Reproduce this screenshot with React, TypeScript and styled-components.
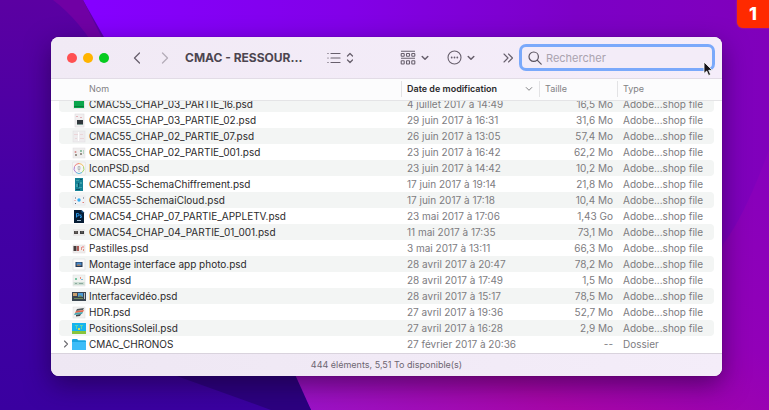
import React from "react";
import styled, { createGlobalStyle, css } from "styled-components";

const GlobalStyle = createGlobalStyle`
  *, *::before, *::after { box-sizing: border-box; }
  html, body, #root { height: 100%; }
  body {
    margin: 0;
    overflow: hidden;
    font-family: Inter, "Liberation Sans", sans-serif;
    font-size: 10px;
    line-height: 16px;
    color: #2b2a2c;
  }
`;

const Desktop = styled.main`
  position: relative;
  isolation: isolate;
  display: flex;
  min-height: 100%;
  padding: 37px 47px 34px 51px;
`;

const Wallpaper = styled.svg`
  position: absolute;
  inset: 0;
  z-index: -1;
  width: 100%;
  height: 100%;
`;

const StepBadge = styled.div`
  position: absolute;
  top: 0;
  right: 0;
  display: flex;
  align-items: center;
  justify-content: center;
  width: 32px;
  height: 28px;
  border-bottom-left-radius: 6px;
  background: #ff2a00;
  box-shadow: 0 0 2px #c63a5c;
  color: #fff;
  font-size: 18px;
  font-weight: 800;
`;

const Window = styled.section`
  flex: 1;
  min-width: 0;
  display: flex;
  flex-direction: column;
  overflow: hidden;
  border-radius: 8px;
  background: #fff;
  box-shadow: 0 0 1px rgba(20, 0, 40, 0.6), 0 9px 26px rgba(20, 0, 40, 0.5);
`;

const Toolbar = styled.header`
  display: flex;
  align-items: center;
  height: 42px;
  padding: 0 7px 0 16px;
  background: linear-gradient(90deg, #f1eaf5, #f5edfa);
  border-bottom: 1px solid #e2dce6;
  color: #68606d;
`;

const Lights = styled.div`
  display: flex;
  gap: 6px;
  margin-right: 23px;
`;

const Light = styled.button<{ $color: string }>`
  width: 10px;
  height: 10px;
  padding: 0;
  border: 0;
  border-radius: 50%;
  background: ${(p) => p.$color};
`;

const ToolButton = styled.button<{ $dim?: boolean }>`
  display: flex;
  align-items: center;
  gap: 5px;
  padding: 0;
  border: 0;
  background: none;
  color: ${(p) => (p.$dim ? "#b5adb9" : "inherit")};
  svg { display: block; }
`;

const Nav = styled.nav`
  display: flex;
  gap: 18px;
`;

const Title = styled.h1`
  flex: 0 0 118px;
  margin: 0 24px 0 15px;
  font-size: 12px;
  font-weight: 700;
  color: #4c454f;
  white-space: nowrap;
`;

const ToolGroup = styled.div`
  display: flex;
  align-items: center;
  gap: 18px;
  margin: 0 27px 0 auto;
`;

const Search = styled.label`
  display: flex;
  align-items: center;
  gap: 4px;
  width: 196px;
  height: 27px;
  margin-left: 5px;
  padding: 0 6px;
  border: 3px solid #7aa9fb;
  border-radius: 7px;
  background: #f3ecf8;
`;

const SearchInput = styled.input`
  flex: 1;
  min-width: 0;
  padding: 0;
  border: 0;
  outline: 0;
  background: none;
  font: inherit;
  font-size: 11px;
  &::placeholder { color: #aaa3af; opacity: 1; }
`;

const ListArea = styled.div`
  flex: 1;
  min-height: 0;
  overflow: hidden;
`;

const Table = styled.table`
  display: block;
`;

const columns = css`
  display: grid;
  grid-template-columns: minmax(0, 1fr) 138px 78px 97px;
`;

const Head = styled.thead`
  position: relative;
  z-index: 1;
  display: block;
  padding: 0 8px;
  background: #fcfcfd;
  border-bottom: 1px solid #e4e4e6;
`;

const HeadRow = styled.tr`
  ${columns}
  height: 21px;
  padding: 2px 0 3px;
`;

const HeadCell = styled.th<{ $first?: boolean; $active?: boolean }>`
  display: flex;
  align-items: center;
  justify-content: space-between;
  padding: 0 6px 0 ${(p) => (p.$first ? "30px" : "5px")};
  border-left: ${(p) => (p.$first ? "0" : "1px solid #e3e3e5")};
  font-size: 9px;
  font-weight: ${(p) => (p.$active ? 600 : 400)};
  color: ${(p) => (p.$active ? "#2b2a2c" : "#828184")};
`;

const SortMark = styled.span`
  display: flex;
  color: #828184;
`;

const Body = styled.tbody`
  display: block;
  margin-top: -5px;
  padding: 0 8px;
`;

const Row = styled.tr`
  ${columns}
  height: 16px;
  border-radius: 4px;
  &:nth-child(odd) { background: #f3f5f4; }
`;

const Cell = styled.td<{ $right?: boolean }>`
  padding: 0 4px 0 6px;
  text-align: ${(p) => (p.$right ? "right" : "left")};
  color: #7d7c7f;
  white-space: nowrap;
`;

const NameCell = styled.td`
  display: grid;
  grid-template-columns: 10px 14px 1fr;
  column-gap: 3px;
  align-items: center;
  padding: 0;
  white-space: nowrap;
`;

const FileName = styled.span`
  grid-column: 3;
`;

const Thumb = styled.svg`
  grid-column: 2;
  grid-row: 1;
  display: block;
`;

const Disclosure = styled.button`
  grid-column: 1;
  grid-row: 1;
  padding: 0 0 0 4px;
  border: 0;
  background: none;
  color: #6d6c70;
  svg { display: block; }
`;

const StatusBar = styled.footer`
  height: 23px;
  padding-top: 3px;
  border-top: 1px solid #d9d3dd;
  background: linear-gradient(90deg, #eee7f3, #f4edf9);
  color: #6d6671;
  font-size: 9px;
  text-align: center;
`;

const Pointer = styled.svg`
  position: absolute;
  top: 61px;
  right: 56px;
`;

function Chevron({ d, w, h, sw = 1.3 }: { d: string; w: number; h: number; sw?: number }) {
  return (
    <svg width={w} height={h} viewBox={`0 0 ${w} ${h}`} fill="none" stroke="currentColor" strokeWidth={sw} strokeLinecap="round" strokeLinejoin="round">
      <path d={d} />
    </svg>
  );
}

const Down = () => <Chevron w={8} h={6} d="M1.2 1.5 4 4.3 6.8 1.5" sw={1.5} />;

const art: Record<string, React.ReactNode> = {
  green: <><rect x="1" y="2" width="12" height="10" fill="#e4e8e6" /><rect x="2" y="2" width="10" height="9" fill="#08a64c" /><path d="M2 9h10v1H2z" fill="#087a3a" /></>,
  doc: <><rect x="3" y="1" width="9" height="13" fill="#f1eff0" stroke="#dddadd" strokeWidth=".6" /><path d="M4 3h2v1H4zM8 4h2v1H8z" fill="#e4b3b8" /><rect x="5" y="7" width="6" height="4" fill="#30383c" /><path d="M5 11h6v1H5z" fill="#7f9993" /></>,
  pale: <><rect x="1" y="2" width="12" height="11" fill="#eeecee" stroke="#e0dde0" strokeWidth=".5" /><path d="M2 5h4v1H2zM8 5h3v1H8zM3 9h2v1H3zM8 9h4v1H8z" fill="#ead6d9" /><path d="M6.5 3v9" stroke="#fff" /></>,
  dots: <><rect x="1" y="3" width="12" height="10" fill="#efeeee" stroke="#e2e0e1" strokeWidth=".5" /><circle cx="3.5" cy="7" r="1" fill="#d58d8b" /><circle cx="9" cy="6" r="1" fill="#73ae8a" /><path d="M3 9h2v2H3zM8 8h2v2H8z" fill="#9a948b" /><path d="M11 5h1v4h-1z" fill="#b9d4c2" /></>,
  rainbow: <><rect x=".5" y="1" width="13" height="13" rx="1" fill="#f6f5f5" stroke="#dedcdc" strokeWidth=".5" /><g fill="none" strokeWidth="1"><path d="M7 2.500a5 5 0 0 1 4.500 3" stroke="#f1bf5c" /><path d="M11.500 5.500a5 5 0 0 1-1.500 6" stroke="#a4d46c" /><path d="M10 11.500a5 5 0 0 1-6 0" stroke="#62b9dc" /><path d="M4 11.500a5 5 0 0 1-1.500-6" stroke="#ad83d6" /><path d="M2.500 5.500a5 5 0 0 1 4.500-3" stroke="#ef7d7b" /></g><path d="M7 5v6M6 5.500h2v3H6z" stroke="#a3a8ac" strokeWidth=".6" fill="none" /></>,
  teal: <><rect x="3" y="1" width="8" height="13" fill="#168296" /><path d="M4 3h3v1H4zM8 5h2v2H8zM4 7h2v3H4zM7 10h3v1H7z" fill="#3ea3ab" /><path d="M8 2h2v1H8zM6 6h1v4H6zM4 12h4v1H4z" fill="#0b5266" /></>,
  cloud: <><rect x="1" y="3" width="12" height="9" fill="#f2f3f5" stroke="#e3e3e6" strokeWidth=".5" /><circle cx="7" cy="7" r="1.700" fill="#32adf0" /><path d="M3 4.500h1v1H3zM11 4.500h1v1h-1zM3 10h1v1H3z" fill="#556273" /><path d="M2.500 7h1v1h-1zM10.500 9h1.500v1h-1.500z" fill="#de817b" /></>,
  ps: <><path d="M2 1h7.500L12 3.500V14H2z" fill="#061d34" /><path d="M9.500 1v2.500H12" fill="#23639b" /><path d="M4.500 8.500v-4h1.300a1.200 1.200 0 0 1 0 2.500H4.500M9.500 6H8.300l-.3.700 1.500.8-.3 1H8" fill="none" stroke="#31a8ff" strokeWidth=".9" /><path d="M5 11h4v1H5z" fill="#9fb9cf" /></>,
  mono: <><rect x="1" y="4" width="12" height="7" fill="#eae9e8" /><rect x="2" y="6" width="4" height="3" fill="#4d4a47" /><rect x="8" y="6" width="4" height="3" fill="#3c3d3e" /><path d="M3 7h2M9 7h2" stroke="#8c8780" strokeWidth=".7" /></>,
  pills: <><rect x="1" y="4" width="12" height="8" fill="#efecec" stroke="#dfdbdb" strokeWidth=".5" /><rect x="1.500" y="5" width="3" height="5" fill="#443b3b" /><rect x="5" y="5" width="2" height="5" fill="#ad5b56" /><path d="M9 6h1v3H9zM11 8h1v2h-1z" fill="#e59084" /><path d="M10 5h2v2h-2z" fill="#edb1b0" /></>,
  photo: <><rect x="1" y="2" width="12" height="11" rx=".5" fill="#fafafa" stroke="#dcdcdd" strokeWidth=".6" /><rect x="3.500" y="5" width="7" height="5" fill="#263a55" /><rect x="4.500" y="5.500" width="5" height="3" fill="#4688ca" /><path d="m4.500 9 2-2 3 2z" fill="#a17b5f" /></>,
  raw: <><rect x="1" y="2" width="12" height="11" fill="#f0f2f0" stroke="#dadddd" strokeWidth=".5" /><path d="M3 5h2v2H3z" fill="#79c5a1" /><path d="M8 4h1v2H8z" fill="#e8917e" /><path d="M9 6h2v1H9z" fill="#7eb6d9" /><path d="M1.500 9h11v3h-11z" fill="#cbdcd1" /><path d="M3 10h2v1H3zM7 10h4v1H7z" fill="#8caaa0" /></>,
  video: <><rect x="0" y="3" width="14" height="9" fill="#3a4550" /><path d="M1 4h4v3H1z" fill="#c8a06e" /><path d="M6 4h5v4H6z" fill="#4c9ad6" /><path d="m6 8 2-2 3 2zM2 9h9v1H2z" fill="#6f8c5b" /><path d="M12 4h1v6h-1z" fill="#bcc3c9" /></>,
  hdr: <><rect x="1" y="2" width="12" height="11" fill="#f2f2f1" stroke="#dedede" strokeWidth=".5" /><path d="m5 4 7-1-1 2-7 1z" fill="#51585b" /><path d="m4 6 8-1-1 2-8 1z" fill="#e2674d" /><path d="m3 8 8-1-1 2-8 1z" fill="#47a6b0" /><path d="m4 10 5-1-1 2-4 .500z" fill="#40464a" /></>,
  sun: <><rect x="0" y="2" width="14" height="11" fill="#14b4ef" /><path d="M0 10h14v3H0z" fill="#87c43c" /><path d="M3 4h3v1H3zM4 5h1v3H4zM8 4h3v1H8zM9 5h1v3H9z" fill="#5fd3a8" /><path d="M6 7h2v2H6z" fill="#d5dc52" /></>,
  folder: <><path d="M0 3a1 1 0 0 1 1-1h4l1.300 1.300H13a1 1 0 0 1 1 1V12a1 1 0 0 1-1 1H1a1 1 0 0 1-1-1z" fill="#19a5e1" /><path d="M0 5h14v7a1 1 0 0 1-1 1H1a1 1 0 0 1-1-1z" fill="#3dbdf8" /></>,
};

const files: [string, string, string, string][] = [
  ["green", "CMAC55_CHAP_03_PARTIE_16.psd", "4 juillet 2017 à 14:49", "16,5 Mo"],
  ["doc", "CMAC55_CHAP_03_PARTIE_02.psd", "29 juin 2017 à 16:31", "31,6 Mo"],
  ["pale", "CMAC55_CHAP_02_PARTIE_07.psd", "26 juin 2017 à 13:05", "57,4 Mo"],
  ["dots", "CMAC55_CHAP_02_PARTIE_001.psd", "23 juin 2017 à 16:42", "62,2 Mo"],
  ["rainbow", "IconPSD.psd", "23 juin 2017 à 14:42", "10,2 Mo"],
  ["teal", "CMAC55-SchemaChiffrement.psd", "17 juin 2017 à 19:14", "21,8 Mo"],
  ["cloud", "CMAC55-SchemaiCloud.psd", "17 juin 2017 à 17:18", "10,4 Mo"],
  ["ps", "CMAC54_CHAP_07_PARTIE_APPLETV.psd", "23 mai 2017 à 17:06", "1,43 Go"],
  ["mono", "CMAC54_CHAP_04_PARTIE_01_001.psd", "11 mai 2017 à 17:35", "73,1 Mo"],
  ["pills", "Pastilles.psd", "3 mai 2017 à 13:11", "66,3 Mo"],
  ["photo", "Montage interface app photo.psd", "28 avril 2017 à 20:47", "78,2 Mo"],
  ["raw", "RAW.psd", "28 avril 2017 à 17:49", "1,5 Mo"],
  ["video", "Interfacevidéo.psd", "28 avril 2017 à 15:17", "78,5 Mo"],
  ["hdr", "HDR.psd", "27 avril 2017 à 19:36", "52,7 Mo"],
  ["sun", "PositionsSoleil.psd", "27 avril 2017 à 16:28", "2,9 Mo"],
  ["folder", "CMAC_CHRONOS", "27 février 2017 à 20:36", "--"],
];

export default function App() {
  return (
    <Desktop>
      <GlobalStyle />
      <Wallpaper viewBox="0 0 769 410" preserveAspectRatio="none" aria-hidden="true">
        <defs>
          <linearGradient id="sky" x1="0" y1="0" x2="1" y2="0">
            <stop offset=".12" stopColor="#8500ff" />
            <stop offset=".45" stopColor="#8200e8" />
            <stop offset=".75" stopColor="#7c00c6" />
            <stop offset="1" stopColor="#8000bb" />
          </linearGradient>
          <linearGradient id="night" x1="0" y1="0" x2="0" y2="1">
            <stop offset="0" stopColor="#5b00a2" />
            <stop offset=".5" stopColor="#4300a4" />
            <stop offset="1" stopColor="#3a00a0" />
          </linearGradient>
          <linearGradient id="glow" x1="0" y1="1" x2="1" y2="0">
            <stop offset="0" stopColor="#9a14cc" />
            <stop offset=".3" stopColor="#a806a8" />
            <stop offset=".6" stopColor="#9200b8" />
            <stop offset="1" stopColor="#8600bc" />
          </linearGradient>
        </defs>
        <path d="M0 0h769v410H0z" fill="url(#sky)" />
        <path d="M769 150 Q745 215 724 243L690 330 270 320l41 90h458z" fill="url(#glow)" />
        <path d="M0 0h83l130 230 98 180H0z" fill="url(#night)" />
        <path d="M53 0h30l20 40v20Q80 20 53 0z" fill="#7000a4" />
        <path d="M160 370h133l18 40h-40z" fill="#2c0080" />
      </Wallpaper>
      <Window aria-label="CMAC - RESSOURCES">
        <Toolbar>
          <Lights>
            <Light $color="#ff5052" aria-label="Fermer" />
            <Light $color="#ffb400" aria-label="Réduire" />
            <Light $color="#06cb1f" aria-label="Agrandir" />
          </Lights>
          <Nav>
            <ToolButton aria-label="Précédent"><Chevron w={10} h={14} d="M7.500 2 2.500 7l5 5" /></ToolButton>
            <ToolButton $dim aria-label="Suivant"><Chevron w={10} h={14} d="m2.500 2 5 5-5 5" /></ToolButton>
          </Nav>
          <Title>CMAC - RESSOUR...</Title>
          <ToolButton aria-label="Présentation">
            <svg width="14" height="12" viewBox="0 0 14 12" fill="none" stroke="currentColor" strokeWidth="1.200" strokeLinecap="round">
              <path d="M4 1.500h9M4 6h9M4 10.500h9M.9 1.500h.2M.9 6h.2M.9 10.500h.2" />
            </svg>
            <Chevron w={8} h={12} d="M1.500 4 4 1.500 6.500 4M1.500 8 4 10.500 6.500 8" />
          </ToolButton>
          <ToolGroup>
            <ToolButton aria-label="Grouper">
              <svg width="16" height="16" viewBox="0 0 16 16" fill="none" stroke="currentColor" strokeWidth="1.100">
                <path d="M1 1.300h14M1 8.300h14" />
                <rect x="1.200" y="3.500" width="3" height="2.700" rx=".5" /><rect x="6.500" y="3.500" width="3" height="2.700" rx=".5" /><rect x="11.800" y="3.500" width="3" height="2.700" rx=".5" />
                <rect x="1.200" y="10.800" width="3" height="3.200" rx=".5" /><rect x="6.500" y="10.800" width="3" height="3.200" rx=".5" /><rect x="11.800" y="10.800" width="3" height="3.200" rx=".5" />
              </svg>
              <Down />
            </ToolButton>
            <ToolButton aria-label="Actions">
              <svg width="15" height="15" viewBox="0 0 15 15" fill="none" stroke="currentColor" strokeWidth="1.100">
                <circle cx="7.500" cy="7.500" r="6.500" />
                <g fill="currentColor" stroke="none"><circle cx="4.700" cy="7.500" r=".9" /><circle cx="7.500" cy="7.500" r=".9" /><circle cx="10.300" cy="7.500" r=".9" /></g>
              </svg>
              <Down />
            </ToolButton>
          </ToolGroup>
          <ToolButton aria-label="Plus d’éléments"><Chevron w={12} h={12} d="m2 2 4 4-4 4M6.500 2l4 4-4 4" sw={1.1} /></ToolButton>
          <Search>
            <svg width="14" height="14" viewBox="0 0 14 14" fill="none" stroke="#5b5460" strokeWidth="1.200" strokeLinecap="round">
              <circle cx="5.700" cy="5.700" r="4.700" /><path d="m9.200 9.200 4 4" />
            </svg>
            <SearchInput type="search" placeholder="Rechercher" aria-label="Rechercher" />
          </Search>
        </Toolbar>
        <ListArea>
          <Table>
            <Head>
              <HeadRow>
                <HeadCell $first scope="col">Nom</HeadCell>
                <HeadCell $active scope="col" aria-sort="descending">
                  Date de modification
                  <SortMark><Chevron w={8} h={6} d="M1.200 1.500 4 4.300 6.800 1.500" sw={1} /></SortMark>
                </HeadCell>
                <HeadCell scope="col">Taille</HeadCell>
                <HeadCell scope="col">Type</HeadCell>
              </HeadRow>
            </Head>
            <Body>
              {files.map(([kind, name, date, size]) => (
                <Row key={name}>
                  <NameCell>
                    {kind === "folder" && (
                      <Disclosure aria-label="Déplier le dossier"><Chevron w={6} h={8} d="m1.500 1 3 3-3 3" sw={1.1} /></Disclosure>
                    )}
                    <Thumb width="14" height="15" viewBox="0 0 14 15" aria-hidden="true">{art[kind]}</Thumb>
                    <FileName>{name}</FileName>
                  </NameCell>
                  <Cell>{date}</Cell>
                  <Cell $right>{size}</Cell>
                  <Cell>{kind === "folder" ? "Dossier" : "Adobe...shop file"}</Cell>
                </Row>
              ))}
            </Body>
          </Table>
        </ListArea>
        <StatusBar>444 éléments, 5,51 To disponible(s)</StatusBar>
      </Window>
      <StepBadge>1</StepBadge>
      <Pointer width="10" height="16" viewBox="0 0 10 16" aria-hidden="true">
        <path d="M1 1v11.500l2.700-2.500 1.900 4.500 2-.9-1.900-4.300H9.300z" fill="#171419" stroke="#fff" strokeWidth=".8" />
      </Pointer>
    </Desktop>
  );
}
